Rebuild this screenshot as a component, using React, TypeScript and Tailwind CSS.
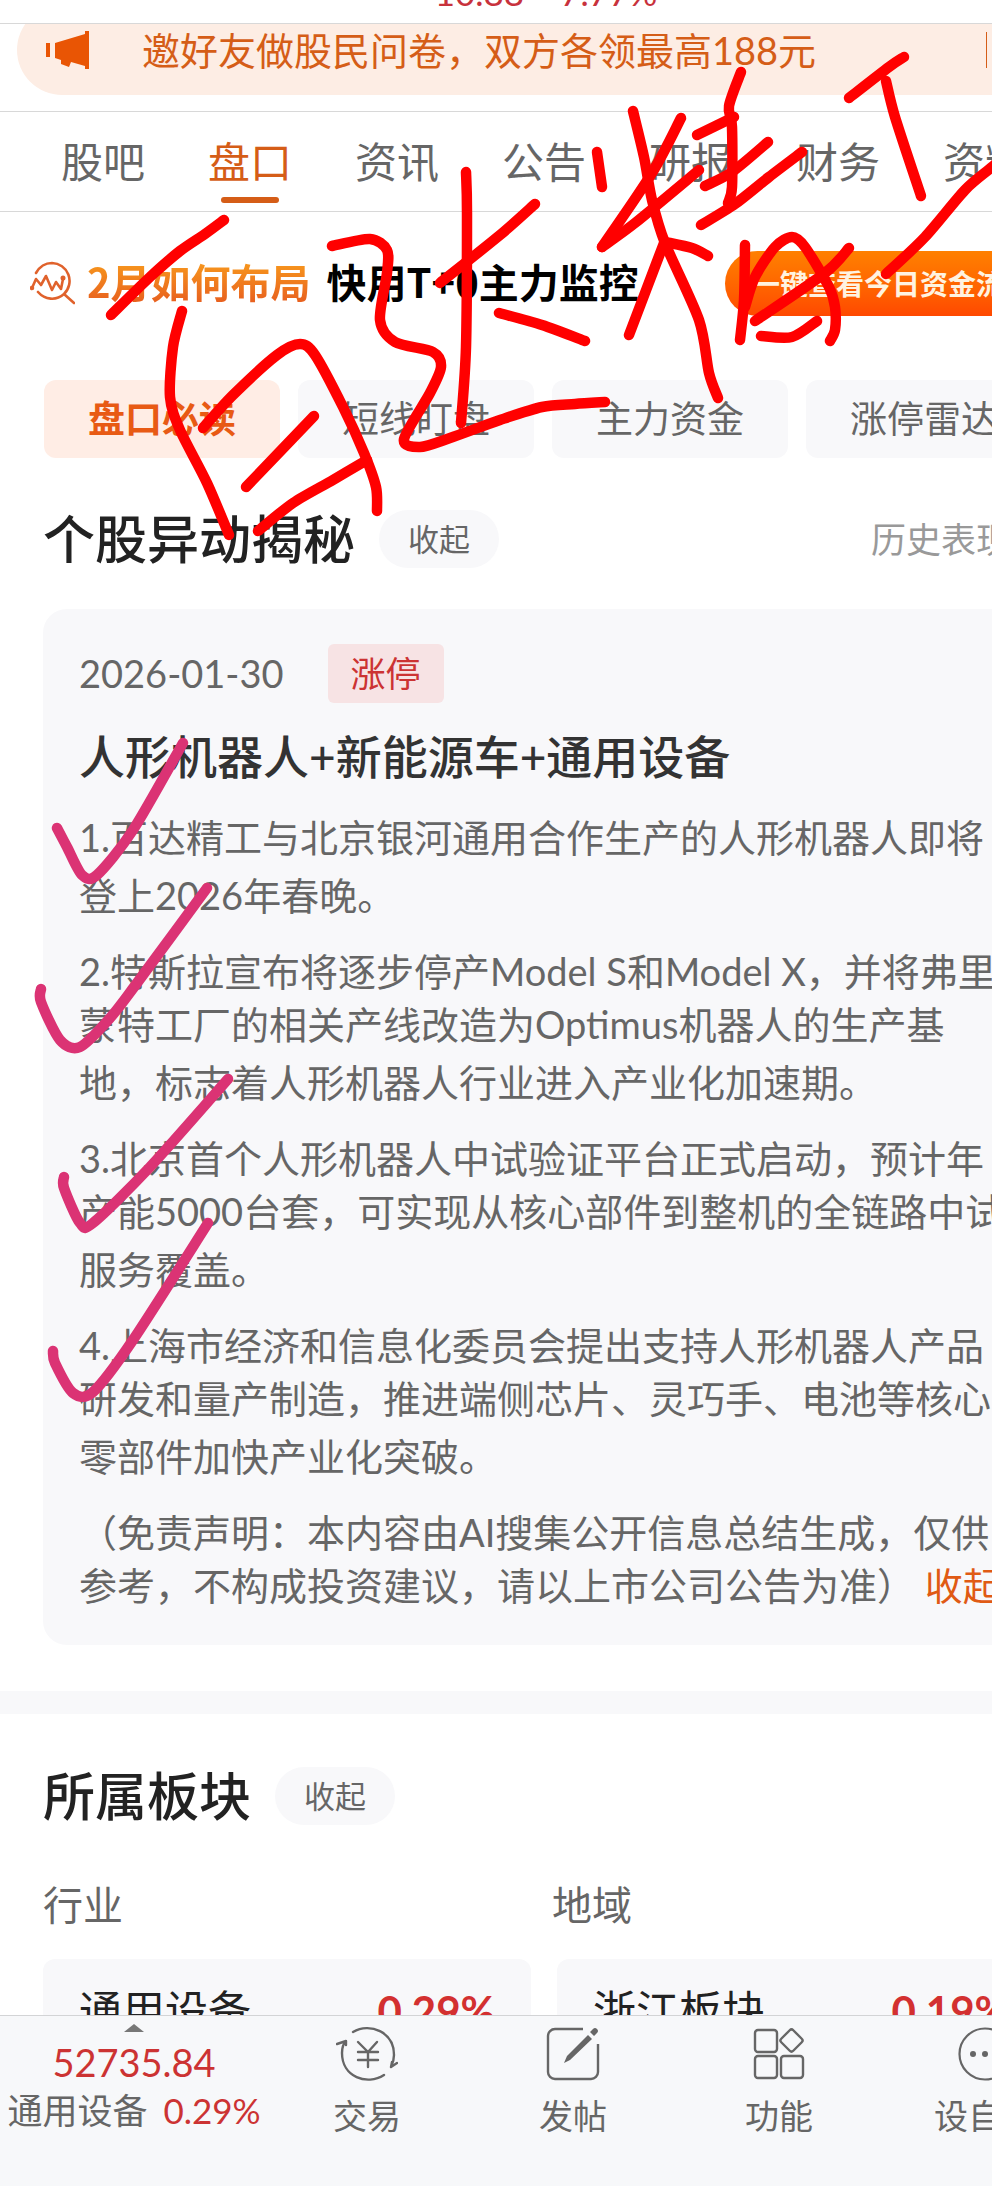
import { ChevronRight, X } from 'lucide-react';

type Point = [number, number];

const TABS = ['股吧', '盘口', '资讯', '公告', '研报', '财务', '资料'];
const CHIPS = ['盘口必读', '短线盯盘', '主力资金', '涨停雷达'];

// Each entry is one paragraph, already broken into its display lines
const REASONS = [
  ['1.百达精工与北京银河通用合作生产的人形机器人即将', '登上2026年春晚。'],
  ['2.特斯拉宣布将逐步停产Model S和Model X，并将弗里', '蒙特工厂的相关产线改造为Optimus机器人的生产基', '地，标志着人形机器人行业进入产业化加速期。'],
  ['3.北京首个人形机器人中试验证平台正式启动，预计年', '产能5000台套，可实现从核心部件到整机的全链路中试', '服务覆盖。'],
  ['4.上海市经济和信息化委员会提出支持人形机器人产品', '研发和量产制造，推进端侧芯片、灵巧手、电池等核心', '零部件加快产业化突破。'],
];

const SECTORS = [
  { kind: '行业', name: '通用设备', change: '0.29%' },
  { kind: '地域', name: '浙江板块', change: '0.19%' },
];

const RED_STROKES: Point[][] = [
  [[224, 220], [205, 234], [180, 251], [150, 277], [111, 315]],
  [[182, 311], [173, 347], [170, 397], [180, 430], [207, 483], [229, 535]],
  [[203, 428], [233, 395], [277, 355], [300, 344], [315, 355], [343, 407], [364, 453], [376, 487], [377, 511]],
  [[314, 416], [246, 487]],
  [[367, 460], [333, 480], [293, 503], [258, 531]],
  [[332, 246], [370, 239], [387, 250], [387, 273], [380, 320], [395, 342], [433, 352], [441, 367], [430, 393], [404, 439], [420, 447], [450, 438], [500, 420], [542, 407], [575, 404], [605, 402]],
  [[466, 172], [467, 213], [466, 347], [461, 423]],
  [[440, 283], [500, 235], [535, 204]],
  [[499, 313], [542, 325], [585, 341]],
  [[597, 152], [602, 187]],
  [[633, 111], [644, 157], [652, 200], [665, 243], [699, 320], [709, 373], [718, 398]],
  [[681, 118], [652, 173], [602, 247]],
  [[602, 247], [635, 223], [699, 170]],
  [[664, 243], [629, 335]],
  [[665, 242], [692, 248], [708, 256]],
  [[741, 72], [729, 106], [732, 127], [732, 187], [728, 203]],
  [[697, 135], [734, 117]],
  [[705, 186], [732, 172], [768, 142]],
  [[701, 225], [735, 204], [769, 177], [802, 152]],
  [[745, 245], [744, 300], [740, 340]],
  [[745, 307], [755, 277], [775, 247], [792, 237], [805, 247], [829, 287], [835, 307], [835, 330], [830, 341]],
  [[755, 321], [825, 273], [849, 248]],
  [[761, 336], [792, 337], [817, 321]],
  [[849, 98], [889, 67], [904, 57]],
  [[886, 81], [895, 117], [921, 196]],
  [[886, 274], [925, 237], [965, 190], [992, 167], [1010, 150]],
];

const PINK_TICKS: Point[][] = [
  [[57, 828], [67, 847], [82, 875], [97, 875], [133, 830], [183, 743]],
  [[41, 989], [41, 1002], [60, 1040], [80, 1047], [110, 1018], [137, 983], [207, 888]],
  [[64, 1177], [64, 1188], [80, 1223], [93, 1223], [150, 1167], [228, 1079]],
  [[53, 1351], [55, 1363], [73, 1393], [93, 1392], [133, 1340], [208, 1223]],
];

// Catmull-Rom through the pen points, written as cubic segments
function toPath(points: Point[]) {
  let d = `M${points[0][0]} ${points[0][1]}`;
  for (let i = 0; i < points.length - 1; i++) {
    const p0 = points[i - 1] ?? points[i];
    const p1 = points[i];
    const p2 = points[i + 1];
    const p3 = points[i + 2] ?? p2;
    d += `C${p1[0] + (p2[0] - p0[0]) / 7} ${p1[1] + (p2[1] - p0[1]) / 7} ${p2[0] - (p3[0] - p1[0]) / 7} ${p2[1] - (p3[1] - p1[1]) / 7} ${p2[0]} ${p2[1]}`;
  }
  return d;
}

function PenMarks() {
  return (
    <svg className="pointer-events-none absolute left-0 top-0 z-20" width="992" height="2186" fill="none" strokeLinecap="round" strokeLinejoin="round" aria-hidden="true">
      <g stroke="#ff0000" strokeWidth="10.5">
        {RED_STROKES.map((s, i) => <path key={i} d={toPath(s)} />)}
      </g>
      <g stroke="#db3374" strokeWidth="10.5">
        {PINK_TICKS.map((s, i) => <path key={i} d={toPath(s)} />)}
      </g>
    </svg>
  );
}

function HornIcon() {
  return (
    <svg className="ml-[29px] shrink-0" width="44" height="38" viewBox="0 0 44 38" fill="#e95504" aria-hidden="true">
      <path d="M0 12h4v14H0zM9 12l30-9V0h4v38h-4v-3l-14-4-2 5-8-3v-4l-6-2z" />
    </svg>
  );
}

function PromoIcon() {
  return (
    <svg className="shrink-0" width="45" height="44" viewBox="0 0 45 44" fill="none" stroke="#e0622c" strokeWidth="2.6" strokeLinecap="round" strokeLinejoin="round" aria-hidden="true">
      <path d="M6 12C10 5 16 2 22 2a18 18 0 0 1 12 31l10 9M8 31c7 8 18 9 26 2" />
      <path d="M2 27l4-9 5 6 5-9 6 14 4-8 5 7 2-10" />
      <circle cx="2" cy="27" r="1" />
      <circle cx="33" cy="17" r="1.2" />
    </svg>
  );
}

function TradeIcon() {
  return (
    <svg width="62" height="56" viewBox="0 0 62 56" fill="none" stroke="#666" strokeWidth="2.4" strokeLinecap="round" strokeLinejoin="round" aria-hidden="true">
      <path d="M17 6C34-4 58 6 58 29c0 5-1 8-3 12l6-4M55 41l1-5" />
      <path d="M48 49C31 60 6 51 6 27c0-5 1-9 4-12l-9 3M10 15v4" />
      <path d="M22 16l10 10 9-10M32 26v15M22 26h20M22 34h20" />
    </svg>
  );
}

function PostIcon() {
  return (
    <svg width="54" height="54" viewBox="0 0 54 54" fill="none" stroke="#666" strokeWidth="2.4" aria-hidden="true">
      <path d="M37 2H9a7 7 0 0 0-7 7v36a7 7 0 0 0 7 7h36a7 7 0 0 0 7-7V17" />
      <path d="M42 8l4 4-22 21-6 3 3-7zM44 5l3-3q2-2 4 0t0 4l-3 3z" fill="#666" stroke="none" />
    </svg>
  );
}

function GridIcon() {
  return (
    <svg width="52" height="54" viewBox="0 0 52 54" fill="none" stroke="#666" strokeWidth="2.4" aria-hidden="true">
      <rect x="2" y="3" width="22" height="22" rx="3" />
      <rect x="2" y="29" width="22" height="22" rx="3" />
      <rect x="28" y="29" width="22" height="22" rx="3" />
      <rect x="30" y="5" width="17" height="17" rx="2.5" transform="rotate(45 38.5 13.5)" />
    </svg>
  );
}

function MoreIcon() {
  return (
    <svg width="54" height="54" viewBox="0 0 54 54" fill="none" stroke="#666" strokeWidth="2.2" aria-hidden="true">
      <circle cx="27" cy="27" r="25.5" />
      <g fill="#666" stroke="none">
        <circle cx="15" cy="27" r="3" />
        <circle cx="27" cy="27" r="3" />
        <circle cx="39" cy="27" r="3" />
      </g>
    </svg>
  );
}

const ACTIONS = [
  { label: '交易', Icon: TradeIcon },
  { label: '发帖', Icon: PostIcon },
  { label: '功能', Icon: GridIcon },
  { label: '设自选', Icon: MoreIcon },
];

function SectionTitle({ title }: { title: string }) {
  return (
    <div className="flex items-center gap-6">
      <h2 className="text-[52px] leading-[58px] font-medium text-[#222]">{title}</h2>
      <button className="h-[58px] rounded-full bg-[#f8f8fa] px-[29px] text-[31px] text-[#666]">收起</button>
    </div>
  );
}

export default function App() {
  return (
    <div className="relative h-screen overflow-hidden bg-white font-['Lato','Noto_Sans_CJK_SC',sans-serif] whitespace-nowrap text-[#666]">
      {/* The page runs past the right edge of the window */}
      <div className="-mr-24 flex h-full flex-col">
        <header className="flex h-6 shrink-0 justify-center gap-9 overflow-hidden border-b border-[#d8d8d8] pl-1 text-[35px] leading-10 text-[#c8323c]">
          <span className="-mt-7">10.88</span>
          <span className="-mt-7">7.77%</span>
        </header>

        <main className="min-h-0 flex-1 overflow-hidden">
          <div className="h-[88px] overflow-hidden border-b border-[#d8d8d8] px-[17px]">
            <div className="-mt-[19px] flex h-[90px] items-center rounded-full bg-[#fdede4] text-[38px] text-[#d55d17]">
              <HornIcon />
              <a href="#survey" className="ml-[52px] flex-1">邀好友做股民问卷，双方各领最高188元</a>
              <div className="h-9 w-px bg-[#d55d17]" />
              <button aria-label="关闭" className="px-6"><X size={36} /></button>
            </div>
          </div>

          <nav className="flex h-[100px] gap-[63px] border-b border-[#d8d8d8] pl-[61px] text-[42px] leading-[100px]">
            {TABS.map(tab => (
              <a key={tab} href="#tab" className={tab === '盘口' ? 'relative text-[#d55d17]' : ''}>
                {tab}
                {tab === '盘口' && <span className="absolute bottom-2 left-[13px] h-[6px] w-[58px] rounded-full bg-[#d55d17]" />}
              </a>
            ))}
          </nav>

          <a href="#promo" className="flex h-[142px] items-center pl-[30px] font-['Noto_Sans_CJK_SC',sans-serif] text-[40px] leading-[52px] font-bold text-black">
            <PromoIcon />
            <span className="ml-3 bg-linear-to-b from-[#f9a01b] to-[#e4531f] bg-clip-text pb-1 text-transparent">2月如何布局</span>
            <span className="ml-4 flex-1 pb-1">快用T+0主力监控</span>
            <span className="h-[65px] w-[363px] rounded-l-full bg-linear-to-b from-[#ff8000] to-[#ff4800] pl-[27px] text-[28px] leading-[65px] text-[#fff3e0]">一键查看今日资金流</span>
          </a>

          <div className="flex gap-[18px] px-11 pt-[26px]">
            {CHIPS.map((chip, i) => (
              <button key={chip} className={`h-[78px] w-[236px] shrink-0 rounded-xl text-[37px] ${i === 0 ? 'bg-[#ffede5] font-bold text-[#e85a14]' : 'bg-[#f8f8fa]'}`}>
                {chip}
              </button>
            ))}
          </div>

          <section className="px-[43px] pt-[52px] pb-[46px]">
            <div className="flex items-center justify-between">
              <SectionTitle title="个股异动揭秘" />
              <a href="#history" className="flex items-center text-[35px] text-[#999]">历史表现<ChevronRight size={34} /></a>
            </div>

            <article className="mt-[41px] rounded-3xl bg-[#f8f8fa] px-9 pt-[35px] pb-[33px] text-[38px] leading-[53px]">
              <div className="flex items-center gap-11">
                <time>2026-01-30</time>
                <span className="h-[59px] rounded-md bg-[#f7e3e4] px-[23px] text-[35px] leading-[59px] text-[#cc3333]">涨停</span>
              </div>
              <h3 className="mt-6 text-[46px] leading-[60px] font-medium text-[#333]">人形机器人+新能源车+通用设备</h3>
              <div className="mt-6 flex flex-col gap-[23px]">
                {REASONS.map(lines => (
                  <p key={lines[0]}>
                    {lines.map(line => <span key={line} className="block last:mt-[5px]">{line}</span>)}
                  </p>
                ))}
                <p>
                  （免责声明：本内容由AI搜集公开信息总结生成，仅供<br />
                  参考，不构成投资建议，请以上市公司公告为准） <a href="#fold" className="text-[#e05a14]">收起</a>
                </p>
              </div>
            </article>
          </section>

          <div className="h-[23px] bg-[#f8f8fa]" />

          <section className="px-[43px] pt-[53px]">
            <SectionTitle title="所属板块" />
            <div className="mt-[54px] grid grid-cols-2 gap-x-4 text-[40px] leading-[52px]">
              {SECTORS.map(sector => <h4 key={sector.kind}>{sector.kind}</h4>)}
            </div>
            <div className="mt-7 grid grid-cols-2 gap-x-[26px]">
              {SECTORS.map(sector => (
                <a key={sector.kind} href="#sector" className="flex h-[104px] items-center justify-between rounded-xl bg-[#f8f8fa] px-9 text-[43px] text-[#222]">
                  {sector.name}
                  <span className="text-[42px] font-bold text-[#d33030]">{sector.change}</span>
                </a>
              ))}
            </div>
          </section>
        </main>

        <footer className="flex h-[171px] shrink-0 border-t border-[#d3d4d6] bg-[#f7f8fa]">
          <a href="#index" className="flex w-[264px] flex-col items-center pt-2 pl-1">
            <svg width="20" height="8" viewBox="0 0 20 8" fill="#777" aria-hidden="true"><path d="M10 0l10 8H0z" /></svg>
            <span className="mt-[6px] text-[38px] leading-[48px] text-[#cc3333]">52735.84</span>
            <span className="flex gap-4 text-[35px] leading-[48px]">
              通用设备<span className="text-[#cc3333]">0.29%</span>
            </span>
          </a>
          {ACTIONS.map(({ label, Icon }) => (
            <button key={label} className="flex flex-1 flex-col items-center pt-[10px] text-[34px] leading-[48px]">
              <span className="flex h-14 items-center"><Icon /></span>
              <span className="mt-[10px]">{label}</span>
            </button>
          ))}
        </footer>
      </div>
      <PenMarks />
    </div>
  );
}
